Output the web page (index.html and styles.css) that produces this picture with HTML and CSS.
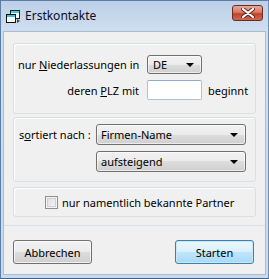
FILE: index.html
```html
<!DOCTYPE html>
<html lang="de">
<head>
  <meta charset="UTF-8">
  <title>Erstkontakte</title>
  <link rel="stylesheet" href="styles.css">
</head>
<body>

  <div class="window">
    <div class="titlebar">
      <svg class="app-icon" width="16" height="14" viewBox="0 0 16 14">
        <rect x="5.5" y="0.5" width="9" height="8" fill="#fff" stroke="#222"/>
        <rect x="6" y="1" width="8" height="2" fill="#39d3e8"/>
        <rect x="1.5" y="4.5" width="9" height="8" fill="#fff" stroke="#111"/>
        <rect x="2" y="5" width="8" height="2" fill="#2fc6e0"/>
        <path d="M12 9 L15 11 L12 13 Z" fill="#444"/>
      </svg>
      <span class="title">Erstkontakte</span>
      <div class="close-btn">
        <svg width="14" height="10" viewBox="0 0 14 10">
          <path d="M2 1 L12 9 M12 1 L2 9" stroke="#5a2a22" stroke-width="4" stroke-linecap="round"/>
          <path d="M2 1 L12 9 M12 1 L2 9" stroke="#fff" stroke-width="2.2" stroke-linecap="round"/>
        </svg>
      </div>
    </div>

    <div class="client">
      <div class="panel">

        <div class="group group-filter">
          <span class="label">nur <u>N</u>iederlassungen in</span>
          <div class="combo combo-small"><span>DE</span><i class="arrow"></i></div>
          <span></span>
          <span class="label">deren <u>P</u>LZ mit</span>
          <div class="textbox"></div>
          <span class="suffix">beginnt</span>
        </div>

        <div class="group group-sort">
          <span class="label">s<u>o</u>rtiert nach :</span>
          <div class="combo"><span>Firmen-Name</span><i class="arrow"></i></div>
          <span></span>
          <div class="combo"><span>aufsteigend</span><i class="arrow"></i></div>
        </div>

        <div class="group group-check">
          <span class="checkbox"></span>
          <span>nur namentlich bekannte Partner</span>
        </div>

      </div>

      <div class="footer">
        <button class="btn">Abbrechen</button>
        <button class="btn btn-default">Starten</button>
      </div>
    </div>
  </div>

</body>
</html>
```

FILE: styles.css
```css
body {
  margin: 0;
  font-family: 'Noto Sans', sans-serif;
  font-size: 11px;
  color: #000;
}

.window {
  width: 269px;
  height: 279px;
  box-sizing: border-box;
  background: linear-gradient(to bottom, #bcd0e8, #cfdeef 30px, #c9daed);
  border: 1px solid #5b7ea6;
  border-right-color: #6f8fb4;
  border-bottom-color: #3f6290;
  display: flex;
  flex-direction: column;
}

.titlebar {
  height: 30px;
  display: flex;
  align-items: center;
  padding-left: 4px;
  position: relative;
}

.app-icon {
  margin-right: 4px;
  margin-top: 1px;
}

.title {
  font-size: 12px;
  color: #0c0c1c;
  margin-top: -1px;
}

.close-btn {
  position: absolute;
  top: 4px;
  right: 5px;
  width: 29px;
  height: 14px;
  border: 1px solid #6a2b22;
  border-radius: 3px;
  background: linear-gradient(to bottom, #e8a898, #d77a66 45%, #c2432c 55%, #d0694f);
  display: flex;
  align-items: center;
  justify-content: center;
}

.client {
  flex: 1;
  margin: 0 2px 3px 2px;
  background: #f0f0f0;
  border: 1px solid #a9bcd3;
  display: flex;
  flex-direction: column;
}

.panel {
  border-bottom: 1px solid #d5dfe5;
  padding: 11px 9px 8px 9px;
  display: flex;
  flex-direction: column;
}

.group {
  border: 1px solid #d5dfe5;
  border-radius: 3px;
  box-shadow: inset 1px 1px 0 #fff;
}

.label {
  white-space: nowrap;
}

.group-filter {
  height: 71px;
  box-sizing: border-box;
  display: grid;
  grid-template-columns: 121px 55px auto;
  grid-template-rows: 19px 20px;
  column-gap: 8px;
  row-gap: 6px;
  align-items: center;
  padding: 11px 0 0 4px;
}

.group-filter .suffix {
  margin-left: -2px;
}

.group-filter .label {
  text-align: right;
}

.group-sort {
  height: 65px;
  box-sizing: border-box;
  margin-top: 3px;
  display: grid;
  grid-template-columns: 77px 150px;
  grid-template-rows: 21px 21px;
  row-gap: 6px;
  align-items: center;
  padding: 6px 0 0 5px;
}

.group-check {
  height: 30px;
  box-sizing: border-box;
  margin-top: 5px;
  display: flex;
  align-items: center;
  gap: 4px;
  padding-left: 31px;
}

.combo {
  height: 100%;
  box-sizing: border-box;
  border: 1px solid #707070;
  border-radius: 3px;
  background: linear-gradient(to bottom, #f2f2f2, #ebebeb 50%, #dddddd 50%, #cfcfcf);
  box-shadow: inset 0 0 0 1px rgba(255, 255, 255, 0.6);
  display: flex;
  align-items: center;
  justify-content: space-between;
  padding: 0 7px 0 4px;
}

.combo-small {
  padding-left: 5px;
}

.arrow {
  width: 0;
  height: 0;
  border-left: 4px solid transparent;
  border-right: 4px solid transparent;
  border-top: 4px solid #000;
}

.textbox {
  height: 100%;
  box-sizing: border-box;
  background: #fff;
  border: 1px solid #abc3dc;
  border-top-color: #8fb0d0;
  border-radius: 2px;
}

.checkbox {
  width: 13px;
  height: 13px;
  box-sizing: border-box;
  border: 1px solid #8f8f8f;
  background: linear-gradient(135deg, #dcdcdc, #f6f6f6);
  box-shadow: inset 0 0 0 1px #f4f4f4, inset 0 0 0 2px #d0d0d0;
}

.footer {
  flex: 1;
  display: flex;
  justify-content: space-between;
  align-items: flex-start;
  padding: 14px 11px 0 9px;
}

.btn {
  width: 79px;
  height: 24px;
  font-family: 'Noto Sans', sans-serif;
  font-size: 11px;
  color: #000;
  border: 1px solid #707070;
  border-radius: 3px;
  background: linear-gradient(to bottom, #f2f2f2, #ebebeb 50%, #dddddd 50%, #cfcfcf);
  box-shadow: inset 0 0 0 1px rgba(255, 255, 255, 0.7);
  padding: 0;
}

.btn-default {
  border-color: #3c7fb1;
  background: linear-gradient(to bottom, #eaf6fd, #d9f0fc 50%, #bee6fd 50%, #a7d9f5);
  box-shadow: inset 0 0 0 1px #c8e8fa;
}
```
